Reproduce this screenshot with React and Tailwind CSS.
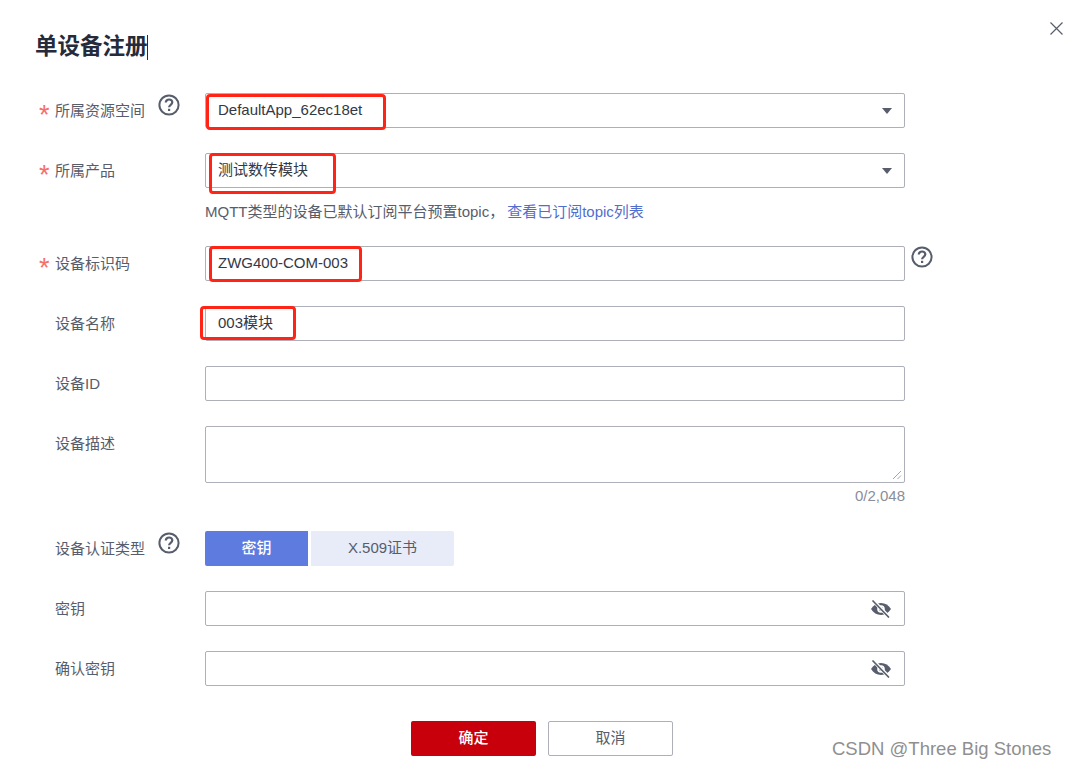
import React from 'react';

const HelpIcon = () => (
    <svg width="22" height="22" viewBox="0 0 22 22" fill="none" className="block">
        <circle cx="11" cy="11" r="9.6" stroke="#575d6c" strokeWidth="2" />
        <path d="M7.800 8.600c0-1.900 1.400-3.100 3.300-3.100s3.200 1.100 3.200 2.800c0 2.500-3.200 2.500-3.200 5" stroke="#575d6c" strokeWidth="2.200" />
        <rect x="10" y="14.800" width="2.200" height="2.200" fill="#575d6c" />
    </svg>
);

const EyeOff = () => (
    <svg width="20" height="18" viewBox="0 0 20 18" className="block mr-px">
        <path d="M0 9c2.400-3.900 5.800-6 10-6s7.600 2.100 10 6c-2.400 3.900-5.800 6-10 6S2.400 12.900 0 9z" fill="#575d6c" />
        <circle cx="10" cy="9" r="3.800" fill="#fff" />
        <circle cx="10" cy="9" r="2" fill="#575d6c" />
        <path d="M2 0.500 18 17" stroke="#fff" strokeWidth="3.500" />
        <path d="M1.500 0.500 18 17.500" stroke="#575d6c" strokeWidth="1.600" />
    </svg>
);

const Caret = () => (
    <svg width="10" height="6" viewBox="0 0 10 6" className="block">
        <path d="M0 0h10L5 6z" fill="#575d6c" />
    </svg>
);

const RedBox = ({ className }) => (
    <div className={`absolute border-[3px] border-[#ff2416] rounded-[4px] ${className}`} />
);

const Row = ({ label, required, help, className = '', children }) => (
    <div className={`flex ${className}`}>
        <div className="w-[166px] shrink-0 flex items-start">
            <span className="w-[16px] h-[35px] shrink-0 overflow-visible text-[#f66f6a] text-[27px] leading-[45px] font-['Liberation_Sans',sans-serif]">{required ? '*' : ''}</span>
            <span className="text-[15px] leading-[35px] text-[#575d6c] w-[103px] whitespace-nowrap">{label}</span>
            {help && <span className="mt-px"><HelpIcon /></span>}
        </div>
        {children}
    </div>
);

const Input = ({ value, right, children }) => (
    <div className="relative w-[700px] h-[35px] border border-[#adb0b8] rounded-[2px] bg-white flex items-center justify-between pl-[12px] pr-[12px] text-[15px] text-[#333845]">
        <span>{value}</span>
        {right}
        {children}
    </div>
);

export default function App() {
    return (
        <div className="relative w-[1067px] h-[768px] bg-white overflow-hidden pt-[33px] pl-[39px] font-['Liberation_Sans','Noto_Sans_CJK_SC',sans-serif]">
            <button className="absolute left-[1050px] top-[22px]">
                <svg width="13" height="13" viewBox="0 0 13 13" className="block">
                    <path d="M0.500 0.500l12 12M12.500 0.500l-12 12" stroke="#575d6c" strokeWidth="1.200" />
                </svg>
            </button>

            <div className="relative -ml-[4px] h-[27px] text-[22.5px] leading-[27px] font-bold text-[#252b3a]">
                单设备注册
                <span className="absolute left-[112px] top-[2px] w-px h-[25px] bg-[#252b3a]" />
            </div>

            <Row label="所属资源空间" required help className="mt-[33px]">
                <Input value="DefaultApp_62ec18et" right={<Caret />}>
                    <RedBox className="left-0 top-0 w-[180px] h-[36px]" />
                </Input>
            </Row>

            <Row label="所属产品" required className="mt-[25px]">
                <div>
                    <Input value="测试数传模块" right={<Caret />}>
                        <RedBox className="left-[3px] -top-px w-[127px] h-[41px]" />
                    </Input>
                    <div className="mt-[14px] h-[20px] text-[15px] leading-[20px] text-[#575d6c] whitespace-nowrap">
                        MQTT类型的设备已默认订阅平台预置topic，
                        <span className="ml-[3px] text-[#526ecc]">查看已订阅topic列表</span>
                    </div>
                </div>
            </Row>

            <Row label="设备标识码" required className="mt-[24px]">
                <Input value="ZWG400-COM-003">
                    <RedBox className="left-[3px] -top-px w-[153px] h-[36px]" />
                </Input>
                <span className="ml-[6px]"><HelpIcon /></span>
            </Row>

            <Row label="设备名称" className="mt-[25px]">
                <Input value="003模块">
                    <RedBox className="-left-[6px] -top-px w-[96px] h-[34px]" />
                </Input>
            </Row>

            <Row label="设备ID" className="mt-[25px]">
                <Input />
            </Row>

            <Row label="设备描述" className="mt-[25px]">
                <div className="w-[700px]">
                    <div className="relative h-[57px] border border-[#adb0b8] rounded-[2px]">
                        <svg width="10" height="10" viewBox="0 0 10 10" className="absolute right-[2px] bottom-[2px]">
                            <path d="M1 9l8-8M5.500 9L9 5.500" stroke="#8a8e99" strokeWidth="0.800" />
                        </svg>
                    </div>
                    <div className="mt-[3px] h-[20px] text-right text-[15px] leading-[20px] text-[#8a8e99]">0/2,048</div>
                </div>
            </Row>

            <Row label="设备认证类型" help className="mt-[25px]">
                <div className="flex gap-[3px] text-[15px]">
                    <div className="w-[103px] h-[35px] rounded-l-[2px] bg-[#5e7ce0] text-white font-medium flex items-center justify-center">密钥</div>
                    <div className="w-[143px] h-[35px] rounded-r-[2px] bg-[#e8ebf8] text-[#575d6c] flex items-center justify-center">X.509证书</div>
                </div>
            </Row>

            <Row label="密钥" className="mt-[25px]">
                <Input right={<EyeOff />} />
            </Row>

            <Row label="确认密钥" className="mt-[25px]">
                <Input right={<EyeOff />} />
            </Row>

            <div className="mt-[35px] ml-[372px] flex gap-[12px] text-[15px]">
                <button className="w-[125px] h-[35px] rounded-[2px] bg-[#c7000b] text-white font-medium">确定</button>
                <button className="w-[125px] h-[35px] rounded-[2px] border border-[#adb0b8] text-[#575d6c]">取消</button>
            </div>

            <div className="absolute left-[832px] top-[737px] text-[18.5px] leading-[24px] text-[#8f8f8f] font-['Liberation_Sans',sans-serif] whitespace-nowrap">CSDN @Three Big Stones</div>
        </div>
    );
}
